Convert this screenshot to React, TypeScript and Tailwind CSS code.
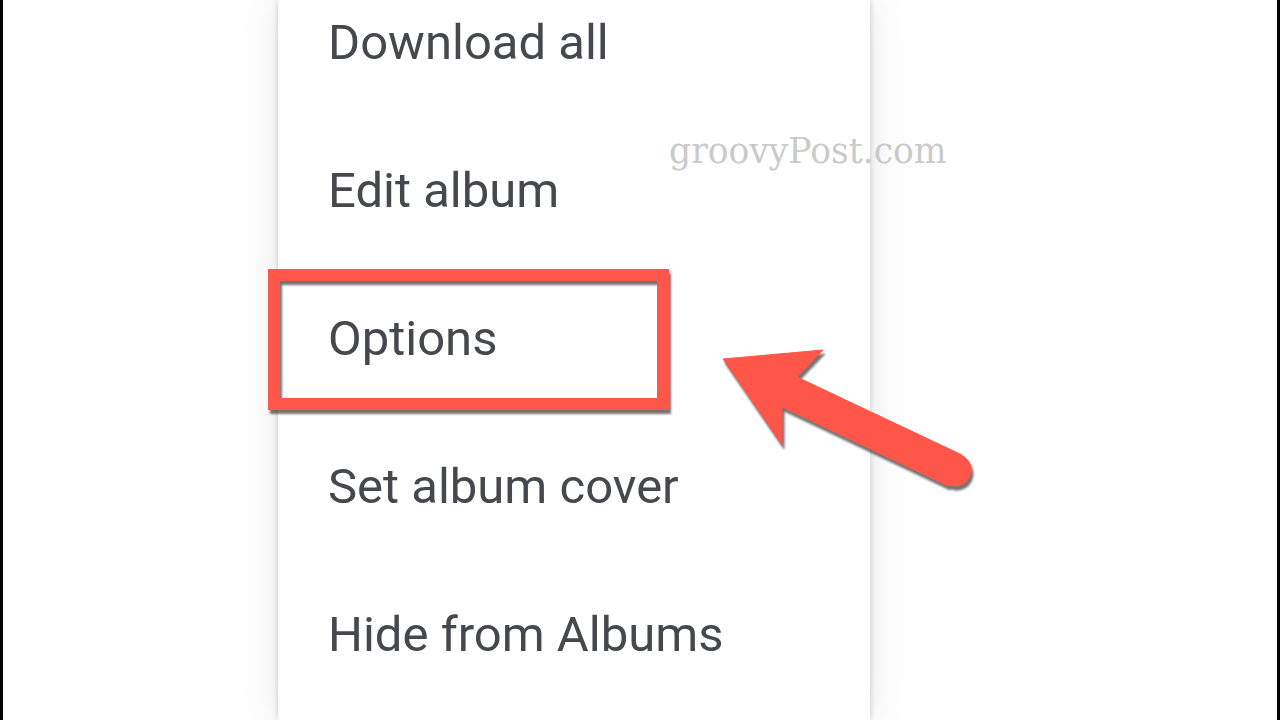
import React from "react";

const items = ["Download all", "Edit album", "Options", "Set album cover", "Hide from Albums"];

export default function App() {
  return (
    <div className="relative flex h-[720px] w-[1280px] overflow-hidden bg-white">
      <div className="h-full w-[3px] shrink-0 bg-black" />
      <div className="flex-1">
        <div className="ml-[275px] flex h-full w-[592px] flex-col bg-white shadow-[0_0_6px_rgba(0,0,0,0.18),0_0_40px_rgba(0,0,0,0.10)]">
          <div className="-mt-[31px] flex flex-col">
            {items.map((t) => (
              <div
                key={t}
                className="relative h-[148px] shrink-0 pl-[50px] text-[49px] leading-[148px] text-[#45484c]"
                style={{ fontFamily: "Roboto, sans-serif" }}
              >
                {t}
                {t === "Options" && (
                  <div className="absolute left-[-10px] top-[4px] h-[141px] w-[401px] border-[12px] border-[#ff564a] [filter:drop-shadow(2px_4px_1px_rgba(0,0,0,0.55))]" />
                )}
              </div>
            ))}
          </div>
        </div>
      </div>
      <div className="h-full w-[3px] shrink-0 bg-black" />

      <div
        className="pointer-events-none absolute left-[669px] top-[131px] text-[34.6px] leading-[40px] text-[#cacaca]"
        style={{ fontFamily: "'DejaVu Serif', serif" }}
      >
        groovyPost.com
      </div>

      <svg
        className="absolute left-0 top-0"
        width="1280"
        height="720"
        viewBox="0 0 1280 720"
        style={{ filter: "drop-shadow(2px 4px 1px rgba(0,0,0,0.55))" }}
      >
        <path
          d="M723 359 L823 350 L797 377 L962 455 L948 486 L782 407 L782 445 Z"
          fill="#ff564a"
          stroke="#ff564a"
          strokeWidth="1"
          strokeLinejoin="miter"
        />
        <line x1="955" y1="470" x2="870" y2="430" stroke="#ff564a" strokeWidth="33" strokeLinecap="round" />
      </svg>
    </div>
  );
}
